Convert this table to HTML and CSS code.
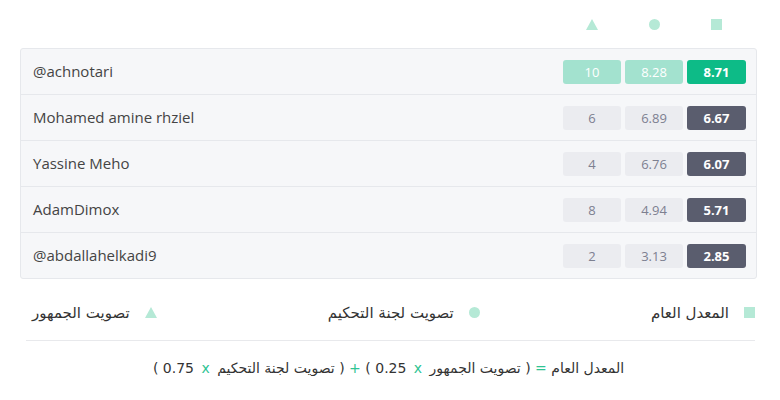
FILE: index.html
```html
<!DOCTYPE html>
<html lang="ar">
<head>
<meta charset="utf-8">
<link rel="stylesheet" href="styles.css">
</head>
<body>
<div class="page">
  <div class="head">
    <span class="hcell"><span class="ic-tri"></span></span>
    <span class="hcell"><span class="ic-circ"></span></span>
    <span class="hcell wide"><span class="ic-sq"></span></span>
  </div>
  <div class="table">
    <div class="row">
      <span class="name">@achnotari</span>
      <span class="scores"><span class="cell lg">10</span><span class="cell lg">8.28</span><span class="cell total top">8.71</span></span>
    </div>
    <div class="row">
      <span class="name">Mohamed amine rhziel</span>
      <span class="scores"><span class="cell">6</span><span class="cell">6.89</span><span class="cell total">6.67</span></span>
    </div>
    <div class="row">
      <span class="name">Yassine Meho</span>
      <span class="scores"><span class="cell">4</span><span class="cell">6.76</span><span class="cell total">6.07</span></span>
    </div>
    <div class="row">
      <span class="name">AdamDimox</span>
      <span class="scores"><span class="cell">8</span><span class="cell">4.94</span><span class="cell total">5.71</span></span>
    </div>
    <div class="row">
      <span class="name">@abdallahelkadi9</span>
      <span class="scores"><span class="cell">2</span><span class="cell">3.13</span><span class="cell total">2.85</span></span>
    </div>
  </div>
  <div class="legend" dir="rtl">
    <span class="item"><span class="ic-sq"></span>المعدل العام</span>
    <span class="item"><span class="ic-circ"></span>تصويت لجنة التحكيم</span>
    <span class="item"><span class="ic-tri"></span>تصويت الجمهور</span>
  </div>
  <div class="formula" dir="rtl">المعدل العام <b class="op">=</b> ( تصويت الجمهور <b class="op x">x</b> <span class="num">0.25</span> ) <b class="op">+</b> ( تصويت لجنة التحكيم <b class="op x">x</b> <span class="num">0.75</span> )</div>
</div>
</body>
</html>
```
FILE: styles.css
```css
html, body { margin: 0; padding: 0; background: #fff; }
body { font-family: "Open Sans", "Noto Sans", sans-serif; color: #333; }
.page { width: 737px; margin-left: 20px; }
.head { display: flex; justify-content: flex-end; gap: 4px; height: 48px; align-items: center; padding-right: 11px; padding-top: 1px; box-sizing: border-box; }
.hcell { width: 58px; display: flex; justify-content: center; }
.hcell.wide { width: 59px; }
.ic-tri { width: 0; height: 0; border-left: 6.5px solid transparent; border-right: 6.5px solid transparent; border-bottom: 11px solid #b5e9d6; display: inline-block; }
.ic-circ { width: 11px; height: 11px; border-radius: 50%; background: #b5e9d6; display: inline-block; }
.ic-sq { width: 11px; height: 11px; background: #b5e9d6; display: inline-block; }
.table { border: 1px solid #e6e8ec; border-radius: 3px; background: #f6f7f9; }
.row { display: flex; align-items: center; justify-content: space-between; height: 45px; padding: 0 10px 0 12px; border-top: 1px solid #e6e8ec; }
.row:first-child { border-top: none; }
.name { font-size: 15px; color: #444; margin-top: -2px; }
.scores { display: flex; gap: 4px; }
.cell { width: 58px; height: 24px; border-radius: 3px; background: #ebecf0; color: #7d8090; font-size: 13px; display: flex; align-items: center; justify-content: center; }
.cell.lg { background: #a3e2cf; color: #fff; }
.cell.total { width: 59px; background: #5a5d6e; color: #fff; font-weight: 700; }
.cell.total.top { background: #0dbb87; }
.legend { display: flex; justify-content: space-between; align-items: center; height: 62px; box-sizing: border-box; padding: 6px 0 0 6px; font-family: "DejaVu Sans", sans-serif; font-size: 15px; color: #333; border-bottom: 1px solid #e8e9ec; margin-left: 6px; margin-right: 2px; }
.legend .item { display: flex; align-items: center; gap: 15px; }
.formula { text-align: center; font-family: "DejaVu Sans", sans-serif; font-size: 14px; color: #333; padding-top: 19px; }
.formula .op { color: #2fc493; font-weight: 400; unicode-bidi: isolate; }
.formula .op.x { margin: 0 3px; }
.formula .num { unicode-bidi: isolate; }
```
